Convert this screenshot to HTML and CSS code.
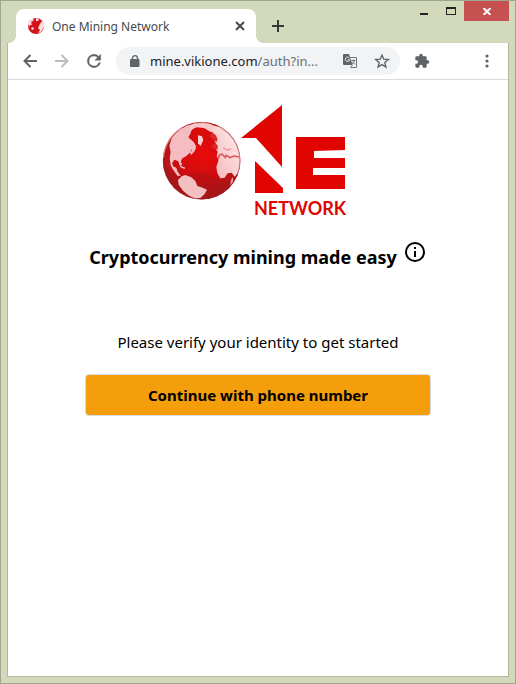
FILE: index.html
```html
<!DOCTYPE html>
<html lang="en">
<head>
    <meta charset="UTF-8">
    <meta name="viewport" content="width=device-width, initial-scale=1">
    <title>One Mining Network</title>
    <link rel="stylesheet" href="styles.css">
</head>
<body>
    <div class="window">
        <header class="titlebar">
            <div class="tab">
                <svg class="favicon" viewBox="0 0 16 16" aria-hidden="true">
                    <circle cx="8" cy="8" r="8" fill="#d3141a"/>
                    <path d="M0 5L3 1L6 0L5 3L3 4L4 7L2 7L1 9zM8 0L11 1L10 3L8 3zM12 6L14 3L16 5V9L13 14L10 15L12 12L10 10zM4 9L6 10L5 12L3 11z" fill="#fbdcdc"/>
                </svg>
                <span class="tab-title">One Mining Network</span>
                <button class="icon-btn tab-close" aria-label="Close tab">
                    <svg width="10" height="10" viewBox="0 0 10 10"><path d="M1 1L9 9M9 1L1 9" stroke="#45494d" stroke-width="2"/></svg>
                </button>
            </div>
            <button class="icon-btn new-tab" aria-label="New tab">
                <svg width="12" height="12" viewBox="0 0 12 12"><path d="M6 0V12M0 6H12" stroke="#36393c" stroke-width="2"/></svg>
            </button>
            <div class="window-buttons">
                <button class="icon-btn win-btn" aria-label="Minimize">
                    <svg width="10" height="10" viewBox="0 0 10 10"><path d="M1 8H9" stroke="#222" stroke-width="2"/></svg>
                </button>
                <button class="icon-btn win-btn" aria-label="Maximize">
                    <svg width="10" height="8" viewBox="0 0 10 8"><path d="M0 1H10M0 7.500H10M.5 0V8M9.500 0V8" stroke="#222"/><path d="M0 1H10" stroke="#222" stroke-width="2"/></svg>
                </button>
                <button class="icon-btn win-btn win-close" aria-label="Close">
                    <svg width="8" height="7" viewBox="0 0 8 7"><path d="M.5 0L7.500 7M7.500 0L.5 7" stroke="#fff" stroke-width="2"/></svg>
                </button>
            </div>
        </header>

        <div class="view">
            <nav class="toolbar">
                <button class="icon-btn nav-btn" aria-label="Back">
                    <svg width="14" height="14" viewBox="0 0 14 14"><path d="M14 7H1.500M7.500 1L1.500 7L7.500 13" fill="none" stroke="#5f6368" stroke-width="2"/></svg>
                </button>
                <button class="icon-btn nav-btn" aria-label="Forward" disabled>
                    <svg width="14" height="14" viewBox="0 0 14 14"><path d="M0 7H12.500M6.500 1L12.500 7L6.500 13" fill="none" stroke="#babcbe" stroke-width="2"/></svg>
                </button>
                <button class="icon-btn nav-btn" aria-label="Reload">
                    <svg width="20" height="20" viewBox="0 0 24 24"><path d="M17.650 6.350A7.960 7.960 0 0 0 12 4a8 8 0 1 0 7.730 10h-2.080A6 6 0 1 1 12 6c1.660 0 3.140.69 4.220 1.780L13 11h7V4z" fill="#5f6368" stroke="#5f6368" stroke-width=".5"/></svg>
                </button>
                <div class="address">
                    <svg width="10" height="12" viewBox="0 0 10 12" aria-hidden="true"><path d="M2.500 5V3.200a2.500 2.500 0 0 1 5 0V5" fill="none" stroke="#5f6368" stroke-width="1.300"/><rect y="4" width="9.500" height="8" rx="1" fill="#5f6368"/></svg>
                    <a class="url" href="#"><span class="host">mine.vikione.com</span>/auth?in...</a>
                    <button class="icon-btn" aria-label="Translate this page">
                        <svg width="14" height="14" viewBox="0 0 14 14">
                            <path d="M5 3.500H13.500V13.500H7.500" fill="#f1f3f4" stroke="#74787c"/>
                            <path d="M0 1a1 1 0 0 1 1-1H6L9.500 11H1a1 1 0 0 1-1-1z" fill="#5f6368"/>
                            <path d="M6.300 4A2.200 2.200 0 1 0 6.700 5.800H4.700" fill="none" stroke="#f1f3f4"/>
                            <path d="M8.500 6.500H12.500M10.500 5.500V6.500M11.700 6.500Q11 9 9 10M9.300 7.500L12 10.500M7.500 13.500L9.500 11" fill="none" stroke="#74787c"/>
                        </svg>
                    </button>
                    <button class="icon-btn star" aria-label="Bookmark this tab">
                        <svg width="16" height="16" viewBox="0 0 24 24"><path d="M12 3L14.600 9.300L21.500 9.900L16.200 14.300L17.900 21L12 17.400L6.100 21L7.800 14.300L2.500 9.900L9.400 9.300z" fill="none" stroke="#5f6368" stroke-width="2"/></svg>
                    </button>
                </div>
                <button class="icon-btn extensions" aria-label="Extensions">
                    <svg width="16" height="16" viewBox="0 0 24 24"><path d="M20.500 11H19V7a2 2 0 0 0-2-2h-4V3.500a2.500 2.500 0 0 0-5 0V5H4a2 2 0 0 0-2 2v3.800h1.500a2.700 2.700 0 0 1 0 5.400H2V20a2 2 0 0 0 2 2h3.800v-1.500a2.700 2.700 0 0 1 5.400 0V22H17a2 2 0 0 0 2-2v-4h1.500a2.500 2.500 0 0 0 0-5z" fill="#5f6368"/></svg>
                </button>
                <button class="icon-btn more" aria-label="Menu">
                    <svg width="4" height="14" viewBox="0 0 4 14"><g fill="#5f6368"><circle cx="2" cy="2" r="1.600"/><circle cx="2" cy="7" r="1.600"/><circle cx="2" cy="12" r="1.600"/></g></svg>
                </button>
            </nav>

            <main class="page">
                <svg class="logo" viewBox="162 104 184 114" role="img" aria-label="One Network">
                    <defs>
                        <radialGradient id="sea" cx="52%" cy="42%" r="58%">
                            <stop offset="0" stop-color="#e90b0b"/>
                            <stop offset=".55" stop-color="#cf0d10"/>
                            <stop offset="1" stop-color="#a81a1d"/>
                        </radialGradient>
                        <linearGradient id="land" x1="0" y1="1" x2="1" y2="0">
                            <stop offset="0" stop-color="#f3b4b6"/>
                            <stop offset="1" stop-color="#fff0f0"/>
                        </linearGradient>
                        <clipPath id="globe"><circle cx="140" cy="188" r="117"/></clipPath>
                    </defs>
                    <!-- globe -->
                    <g transform="translate(155 98) scale(.3333)" clip-path="url(#globe)">
                        <circle cx="140" cy="188" r="117" fill="url(#sea)"/>
                        <path d="M24 188Q42 242 96 230Q150 214 182 240Q214 258 242 240L220 300L80 305L24 250z" fill="#8e1518" opacity=".3"/>
                        <path d="M50 120L70 96L96 82L116 78L121 86L110 94L106 108L100 118L109 126L116 132L123 144L122 154L111 151L106 163L94 174L82 181L77 192L82 199L75 205L70 190L58 185L52 194L54 205L64 209L67 219L77 234L67 233L53 213L47 202L44 180L47 162L43 143z" fill="#f5bcc1"/>
                        <path d="M103 141L113 136L122 151L118 161L108 171L105 164L111 157zM77 203L91 209L88 213L75 207z" fill="#f5bcc1"/>
                        <path d="M80 235L91 231L109 238L121 249L127 264L143 269L156 275L149 288L137 299L120 303L100 292L84 278L71 260L69 246z" fill="#f3bfc0"/>
                        <path d="M107 81L119 74L147 72L167 78L183 86L191 98L184 96L178 103L167 102L157 96L148 91L132 95L119 91L108 99L104 91z" fill="#f9c9c9"/>
                        <path d="M110 96L124 88L145 90L162 101L171 113L167 125L151 123L146 130L157 138L147 140L138 130L136 147L128 139L127 126L116 115z" fill="#d90c0c"/>
                        <path d="M129 112L141 115L145 126L137 144L129 136z" fill="#fbd0d0"/>
                        <path d="M169 96L176 83L195 86L222 102L244 130L254 158L258 190L252 221L239 236L230 224L218 226L209 239L196 241L187 225L184 207L191 185L185 174L188 162L181 151L184 140L178 126L187 121L178 111z" fill="url(#land)"/>
                        <path d="M170 103L182 111L188 125L184 132L171 121L164 118zM181 135L189 144L187 155L175 151L169 143z" fill="#d9292b"/>
                        <path d="M189 182L193 172L200 168L211 178L214 172L225 179L237 174L252 177" fill="none" stroke="#dc5558" stroke-width="5"/>
                        <path d="M205 150L218 157L228 152" fill="none" stroke="#ee9295" stroke-width="4"/>
                        <path d="M228 245L234 237L235 251L225 263z" fill="#e99698"/>
                        <circle cx="140" cy="188" r="115" fill="none" stroke="#a02428" stroke-width="4" opacity=".5"/>
                        <path d="M25 178A116 116 0 0 1 81 88" fill="none" stroke="#ee9295" stroke-width="4"/>
                    </g>
                    <!-- the N with an arrow head, then the E -->
                    <g fill="#e00500">
                        <path d="M241 138L282 105V167L256 138z"/>
                        <path d="M255 161L283 188V193H255z"/>
                        <path d="M296 137H345V150L314 151V158H345V168H313V175H345V189H296z"/>
                        <text class="logo-text" x="254" y="215">NETWORK</text>
                    </g>
                </svg>

                <h1 class="headline">
                    Cryptocurrency mining made easy
                    <button class="icon-btn info" aria-label="More information">
                        <svg width="24" height="24" viewBox="0 0 24 24"><path d="M11 7h2v2h-2zm0 4h2v6h-2zm1-9a10 10 0 1 0 0 20 10 10 0 0 0 0-20zm0 18a8 8 0 1 1 0-16 8 8 0 0 1 0 16z" fill="#000"/></svg>
                    </button>
                </h1>
                <p class="hint">Please verify your identity to get started</p>
                <button class="continue">Continue with phone number</button>
            </main>
        </div>
    </div>
</body>
</html>
```

FILE: styles.css
```css
* {
    box-sizing: border-box;
}
body {
    margin: 0;
    font-family: "Noto Sans", "Open Sans", sans-serif;
    color: #000;
}
button {
    font-family: inherit;
}
.window {
    display: flex;
    flex-direction: column;
    min-height: 100vh;
    padding: 0 6px 6px;
    background-color: #d3d9bb;
    border: 1px solid #a0a58d;
}
.icon-btn {
    display: flex;
    align-items: center;
    justify-content: center;
    flex-shrink: 0;
    padding: 0;
    border: 0;
    background: none;
}

/* title bar */
.titlebar {
    display: flex;
    align-items: flex-end;
    height: 42px;
    padding-left: 9px;
}
.tab {
    position: relative;
    display: flex;
    align-items: center;
    width: 240px;
    height: 34px;
    padding: 0 11px 0 12px;
    background-color: #fff;
    border-radius: 8px 8px 0 0;
}
/* curved feet of the tab */
.tab::before,
.tab::after {
    content: "";
    position: absolute;
    bottom: 0;
    width: 8px;
    height: 8px;
}
.tab::before {
    right: 100%;
    background: radial-gradient(circle at 0 0, transparent 8px, #fff 8px);
}
.tab::after {
    left: 100%;
    background: radial-gradient(circle at 100% 0, transparent 8px, #fff 8px);
}
.favicon {
    width: 16px;
    height: 16px;
    margin-right: 8px;
}
.tab-title {
    flex: 1;
    font-size: 12px;
    color: #45494d;
    white-space: nowrap;
}
.new-tab {
    width: 28px;
    height: 34px;
    margin-left: 8px;
}
.window-buttons {
    display: flex;
    align-self: flex-start;
    margin-left: auto;
}
.win-btn {
    width: 27px;
    height: 20px;
}
.win-close {
    width: 45px;
    background-color: #c75050;
}

/* browser view */
.view {
    flex: 1;
    display: flex;
    flex-direction: column;
    background-color: #fff;
    border: 1px solid #b1b79b;
    border-top: 0;
}
.toolbar {
    display: flex;
    align-items: center;
    height: 37px;
    padding: 0 11px 0 6px;
    border-bottom: 1px solid #d9dbde;
}
.nav-btn {
    width: 32px;
    height: 28px;
}
.address {
    flex: 1;
    display: flex;
    align-items: center;
    height: 28px;
    margin-left: 6px;
    padding: 0 10px 0 14px;
    background-color: #f1f3f4;
    border-radius: 14px;
}
.url {
    flex: 1;
    margin-left: 10px;
    font-size: 13px;
    color: #6b6f73;
    text-decoration: none;
    white-space: nowrap;
}
.host {
    color: #202124;
}
.star {
    margin-left: 17px;
}
.extensions {
    margin-left: 14px;
}
.more {
    width: 20px;
    height: 28px;
    margin-left: 47px;
}

/* page */
.page {
    display: flex;
    flex-direction: column;
    align-items: center;
    padding: 24px 77px;
}
.logo {
    width: 184px;
    height: 114px;
    margin-right: 8px;
}
.logo-text {
    font-family: Lato, sans-serif;
    font-size: 18px;
    font-weight: bold;
}
.headline {
    display: flex;
    align-items: center;
    gap: 6px;
    margin: 24px 0 0;
    font-size: 18px;
    line-height: 30px;
    white-space: nowrap;
}
.info {
    align-self: flex-start;
    margin-top: -2px;
}
.hint {
    margin: 58px 0 0;
    font-size: 15px;
    line-height: 24px;
}
.continue {
    width: 100%;
    height: 42px;
    margin-top: 20px;
    font-size: 15px;
    font-weight: bold;
    color: #000;
    background-color: #f59e0b;
    border: 1px solid #d9dce2;
    border-radius: 4px;
}
```
